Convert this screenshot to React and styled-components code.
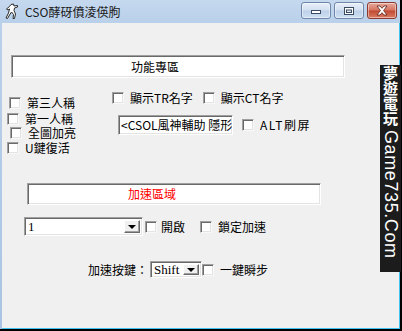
import React from 'react';
import styled, { createGlobalStyle } from 'styled-components';

const FONT = '"Noto Sans CJK TC", "Liberation Sans", sans-serif';

const GlobalStyle = createGlobalStyle`
  html, body {
    margin: 0;
    padding: 0;
    background: #000;
  }
  body {
    font-family: ${FONT};
  }
`;

const Screen = styled.div`
  position: relative;
  width: 402px;
  height: 331px;
  background: #000;
  overflow: hidden;
`;

const Window = styled.div`
  width: 400px;
  height: 329px;
  display: flex;
  flex-direction: column;
  background: linear-gradient(#c5d8ee, #b9d0ea 23px, #a9c4e4);
`;

const TitleBar = styled.div`
  height: 23px;
  flex: none;
  display: flex;
  align-items: center;
  padding: 0 3px 0 5px;
`;

const TitleText = styled.span`
  margin-left: 6px;
  font-size: 12px;
  line-height: 14px;
  color: #1b1b1b;
  flex: 1;
`;

const CaptionButtons = styled.div`
  display: flex;
  gap: 3px;
  margin-top: -2px;
`;

const CaptionButton = styled.div`
  width: 30px;
  height: 17px;
  box-sizing: border-box;
  border-radius: 3px;
  display: flex;
  align-items: center;
  justify-content: center;
  border: 1px solid ${(p) => (p.$close ? '#8a3a30' : '#6f86a8')};
  background: ${(p) =>
    p.$close
      ? 'linear-gradient(#e6aa9c, #d6735f 48%, #c24a33 52%, #d97c60)'
      : 'linear-gradient(#e8eff8, #d2e0f1 48%, #bcd0e9 52%, #cfe0f2)'};
  box-shadow: inset 0 0 0 1px rgba(255, 255, 255, 0.45);
`;

const Client = styled.div`
  flex: 1;
  margin-left: 2px;
  background: #f0f0f0;
  border-right: 1px solid #40c4ef;
  border-bottom: 1px solid #40c4ef;
  display: flex;
  flex-direction: column;
  font-size: 12px;
  color: #000;
`;

const Field = styled.div`
  box-sizing: border-box;
  width: ${(p) => p.$w}px;
  height: ${(p) => p.$h}px;
  margin: ${(p) => p.$top || 0}px 0 0 ${(p) => p.$left || 0}px;
  background: #fff;
  border-top: 1px solid #a0a0a0;
  border-left: 1px solid #a0a0a0;
  border-right: 1px solid #fff;
  border-bottom: 1px solid #fff;
  box-shadow: inset 1px 1px 0 #696969, inset -1px -1px 0 #e3e3e3;
  display: flex;
  align-items: center;
  padding-left: ${(p) => p.$pad || 3}px;
  overflow: hidden;
  white-space: nowrap;
  font-size: 12px;
  line-height: 14px;
  color: ${(p) => p.$color || '#000'};
`;

const Middle = styled.div`
  display: flex;
  margin-top: 14px;
  height: 63px;
`;

const LeftCol = styled.div`
  width: 110px;
  display: flex;
  flex-direction: column;
`;

const RightCol = styled.div`
  display: flex;
  flex-direction: column;
`;

const Row = styled.div`
  display: flex;
  align-items: center;
  margin: ${(p) => p.$top || 0}px 0 0 ${(p) => p.$left || 0}px;
`;

const Check = styled.span`
  flex: none;
  box-sizing: border-box;
  width: 12px;
  height: 12px;
  margin-left: ${(p) => p.$gap || 0}px;
  background: #fff;
  border-top: 1px solid #a0a0a0;
  border-left: 1px solid #a0a0a0;
  border-right: 1px solid #f8f8f8;
  border-bottom: 1px solid #f8f8f8;
  box-shadow: inset 1px 1px 0 #6a6a6a, inset -1px -1px 0 #e3e3e3;
`;

const Label = styled.span`
  margin-left: ${(p) => p.$gap ?? 6}px;
  font-size: 12px;
  line-height: 12px;
  white-space: nowrap;
  letter-spacing: ${(p) => p.$spacing || 0}px;
`;

const Combo = styled.div`
  box-sizing: border-box;
  width: ${(p) => p.$w}px;
  height: ${(p) => p.$h}px;
  margin-left: ${(p) => p.$left || 0}px;
  background: #fff;
  border-top: 1px solid #a0a0a0;
  border-left: 1px solid #a0a0a0;
  border-right: 1px solid #fff;
  border-bottom: 1px solid #fff;
  box-shadow: inset 1px 1px 0 #696969, inset -1px -1px 0 #e3e3e3;
  display: flex;
  align-items: center;
  padding: 2px 2px 2px 3px;
  font-size: 12px;
  line-height: 13px;
`;

const ComboText = styled.span`
  flex: 1;
  font-family: "Liberation Serif", serif;
  font-size: 13px;
`;

const DropButton = styled.span`
  box-sizing: border-box;
  width: 16px;
  height: 100%;
  background: #f0f0f0;
  border-top: 1px solid #fff;
  border-left: 1px solid #fff;
  border-right: 1px solid #696969;
  border-bottom: 1px solid #696969;
  box-shadow: inset -1px -1px 0 #a0a0a0;
  display: flex;
  align-items: center;
  justify-content: center;
  &::after {
    content: '';
    border-left: 4px solid transparent;
    border-right: 4px solid transparent;
    border-top: 4px solid #000;
  }
`;

const Watermark = styled.div`
  position: absolute;
  left: 380px;
  top: 65px;
  width: 21px;
  height: 207px;
  background: #1c1c1c;
  color: #fff;
  writing-mode: vertical-rl;
  display: flex;
  align-items: center;
  padding-top: 1px;
  box-sizing: border-box;
  white-space: nowrap;
`;

const MarkCjk = styled.span`
  font-family: ${FONT};
  font-weight: 700;
  font-size: 15px;
  line-height: 21px;
`;

const MarkLatin = styled.span`
  font-family: "Liberation Sans", sans-serif;
  font-size: 18px;
  line-height: 21px;
  margin-top: 4px;
  letter-spacing: 0.6px;
`;

const AppIcon = () => (
  <svg width="14" height="17" viewBox="0 0 14 17">
    <path
      d="M6 1.5 L8.5 1 L9 3 L12.5 2.5 L12.5 4 L9.5 5 L9 7.5 L10.5 11 L9.5 15.5 L8 15.5 L8.5 11.5 L6.5 9 L4.5 12 L2.5 15.5 L1 15 L3.5 10 L4.5 6 L3 7 L1.5 6 L4.5 3.5 Z"
      fill="#fff"
      stroke="#2a2a2a"
      strokeWidth="1"
      strokeLinejoin="round"
    />
  </svg>
);

const MinIcon = () => (
  <svg width="12" height="8" viewBox="0 0 12 8">
    <rect x="1.5" y="3.5" width="9" height="3" fill="#fff" stroke="#3a4a60" />
  </svg>
);

const MaxIcon = () => (
  <svg width="12" height="10" viewBox="0 0 12 10">
    <rect x="1.5" y="1.5" width="9" height="7" fill="#fff" stroke="#3a4a60" />
    <rect x="3.5" y="4" width="5" height="2.5" fill="#dfe8f3" stroke="#3a4a60" />
  </svg>
);

const CloseIcon = () => (
  <svg width="14" height="11" viewBox="0 0 14 11">
    <path
      d="M2 1 L5 1 L7 3.3 L9 1 L12 1 L8.6 5.5 L12 10 L9 10 L7 7.7 L5 10 L2 10 L5.4 5.5 Z"
      fill="#fff"
      stroke="#5a1f16"
      strokeWidth="0.8"
      strokeLinejoin="round"
    />
  </svg>
);

export default function App() {
  return (
    <>
      <GlobalStyle />
      <Screen>
        <Window>
          <TitleBar>
            <AppIcon />
            <TitleText>CSO酵砑僨淩偀朐</TitleText>
            <CaptionButtons>
              <CaptionButton><MinIcon /></CaptionButton>
              <CaptionButton><MaxIcon /></CaptionButton>
              <CaptionButton $close><CloseIcon /></CaptionButton>
            </CaptionButtons>
          </TitleBar>
          <Client>
            <Field $w={334} $h={23} $top={32} $left={9} $pad={119}>
              功能專區
            </Field>

            <Middle>
              <LeftCol>
                <Row $top={5} $left={7}>
                  <Check />
                  <Label>第三人稱</Label>
                </Row>
                <Row $top={4} $left={5}>
                  <Check />
                  <Label>第一人稱</Label>
                </Row>
                <Row $top={2} $left={8}>
                  <Check />
                  <Label>全圖加亮</Label>
                </Row>
                <Row $top={3} $left={5}>
                  <Check />
                  <Label>U鍵復活</Label>
                </Row>
              </LeftCol>
              <RightCol>
                <Row>
                  <Check />
                  <Label>顯示TR名字</Label>
                  <Check $gap={10} />
                  <Label>顯示CT名字</Label>
                </Row>
                <Row $top={11} $left={6}>
                  <Field $w={115} $h={20} $pad={2}>
                    &lt;CSOL風神輔助 隱形
                  </Field>
                  <Check $gap={9} />
                  <Label $spacing={1.5}>ALT刷屏</Label>
                </Row>
              </RightCol>
            </Middle>

            <Field $w={294} $h={22} $top={28} $left={25} $pad={100} $color="#ff0000">
              加速區域
            </Field>

            <Row $top={12} $left={22}>
              <Combo $w={119} $h={19}>
                <ComboText>1</ComboText>
                <DropButton />
              </Combo>
              <Check $gap={2} />
              <Label $gap={4}>開啟</Label>
              <Check $gap={15} />
              <Label>鎖定加速</Label>
            </Row>

            <Row $top={25} $left={86}>
              <Label $gap={0}>加速按鍵：</Label>
              <Combo $w={52} $h={17} $left={2}>
                <ComboText>Shift</ComboText>
                <DropButton />
              </Combo>
              <Check />
              <Label $gap={6}>一鍵瞬步</Label>
            </Row>
          </Client>
        </Window>
        <Watermark>
          <MarkCjk>夢遊電玩</MarkCjk>
          <MarkLatin>Game735.Com</MarkLatin>
        </Watermark>
      </Screen>
    </>
  );
}
